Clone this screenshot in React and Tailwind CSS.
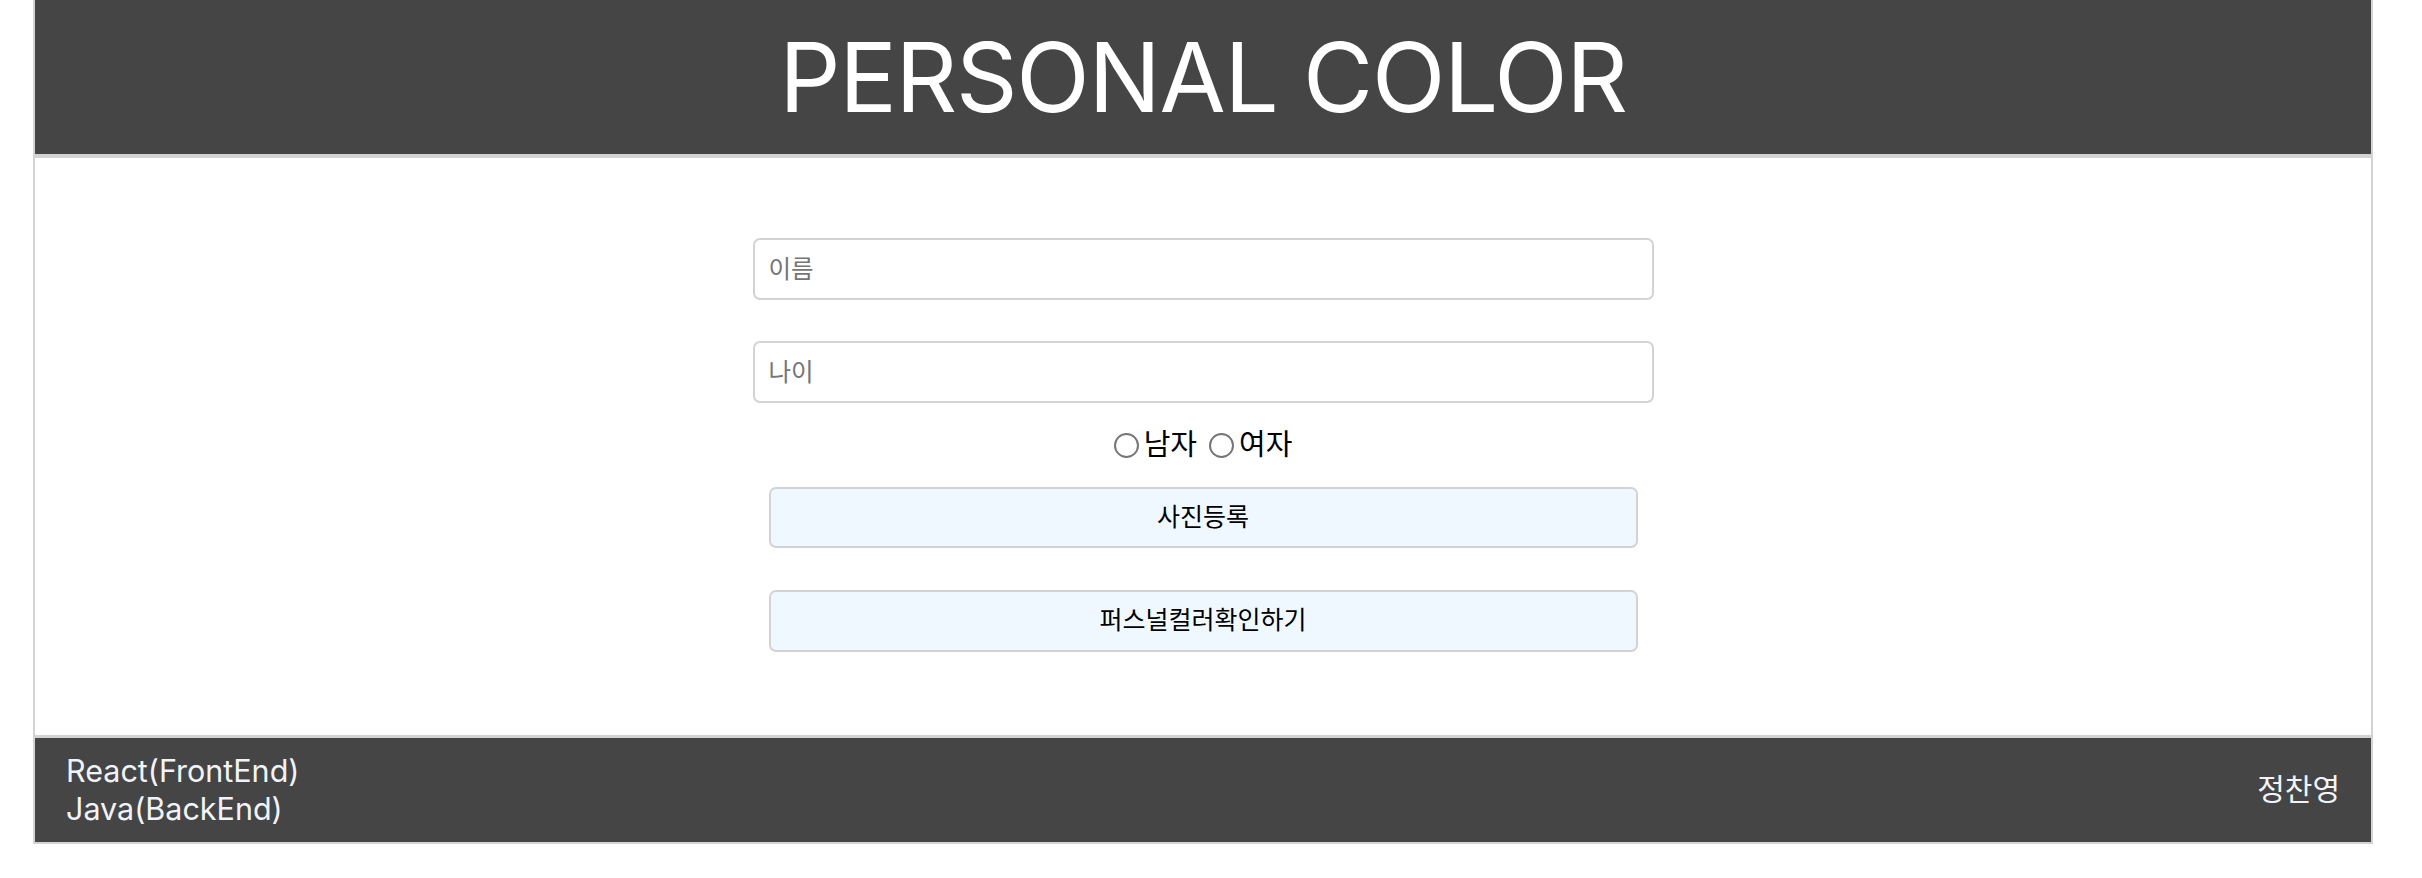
import { useState } from "react";

const font = { fontFamily: 'Inter, "Noto Sans CJK KR", sans-serif' };

export default function App() {
  const [name, setName] = useState("");
  const [age, setAge] = useState("");
  const [gender, setGender] = useState("");

  return (
    <div style={font} className="ml-[33px] w-[2340px] border-x-2 border-b-2 border-[#d3d3d3] bg-white">
      <header className="h-[158px] bg-[#454545] border-b-4 border-[#d3d3d3] flex items-center justify-center">
        <h1 className="text-[96px] font-normal text-white leading-normal tracking-[-1.3px]">PERSONAL COLOR</h1>
      </header>

      <main className="h-[577px] flex flex-col items-center pt-[80px]">
        <input
          type="text"
          placeholder="이름"
          value={name}
          onChange={(e) => setName(e.target.value)}
          className="w-[901px] h-[62px] px-[14px] text-[24.5px] border-2 border-[#d3d3d3] rounded-[7px] placeholder:text-[#757575] outline-none"
        />
        <input
          type="text"
          placeholder="나이"
          value={age}
          onChange={(e) => setAge(e.target.value)}
          className="mt-[41px] w-[901px] h-[62px] px-[14px] text-[24.5px] border-2 border-[#d3d3d3] rounded-[7px] placeholder:text-[#757575] outline-none"
        />
        <div className="mt-[24px] h-[36px] flex items-center text-[29px] text-black">
          <label className="flex items-center">
            <input
              type="radio"
              name="gender"
              checked={gender === "m"}
              onChange={() => setGender("m")}
              className="appearance-none w-[25px] h-[25px] rounded-full border-2 border-[#767676] mr-[5px]"
            />
            남자
          </label>
          <label className="flex items-center ml-[12px]">
            <input
              type="radio"
              name="gender"
              checked={gender === "f"}
              onChange={() => setGender("f")}
              className="appearance-none w-[25px] h-[25px] rounded-full border-2 border-[#767676] mr-[5px]"
            />
            여자
          </label>
        </div>
        <button className="mt-[24px] w-[869px] h-[61px] bg-[#f0f8ff] border-2 border-[#d3d3d3] rounded-[7px] text-[25px] text-black">
          사진등록
        </button>
        <button className="mt-[42px] w-[869px] h-[62px] bg-[#f0f8ff] border-2 border-[#d3d3d3] rounded-[7px] text-[25px] text-black">
          퍼스널컬러확인하기
        </button>
      </main>

      <footer className="h-[107px] bg-[#454545] border-t-[3px] border-[#d3d3d3] flex items-center justify-between px-[31px] text-[30.5px] text-[#f0f4fa] leading-[1.25]">
        <div>
          <p>React(FrontEnd)</p>
          <p>Java(BackEnd)</p>
        </div>
        <p className="text-[30px]">정찬영</p>
      </footer>
    </div>
  );
}
